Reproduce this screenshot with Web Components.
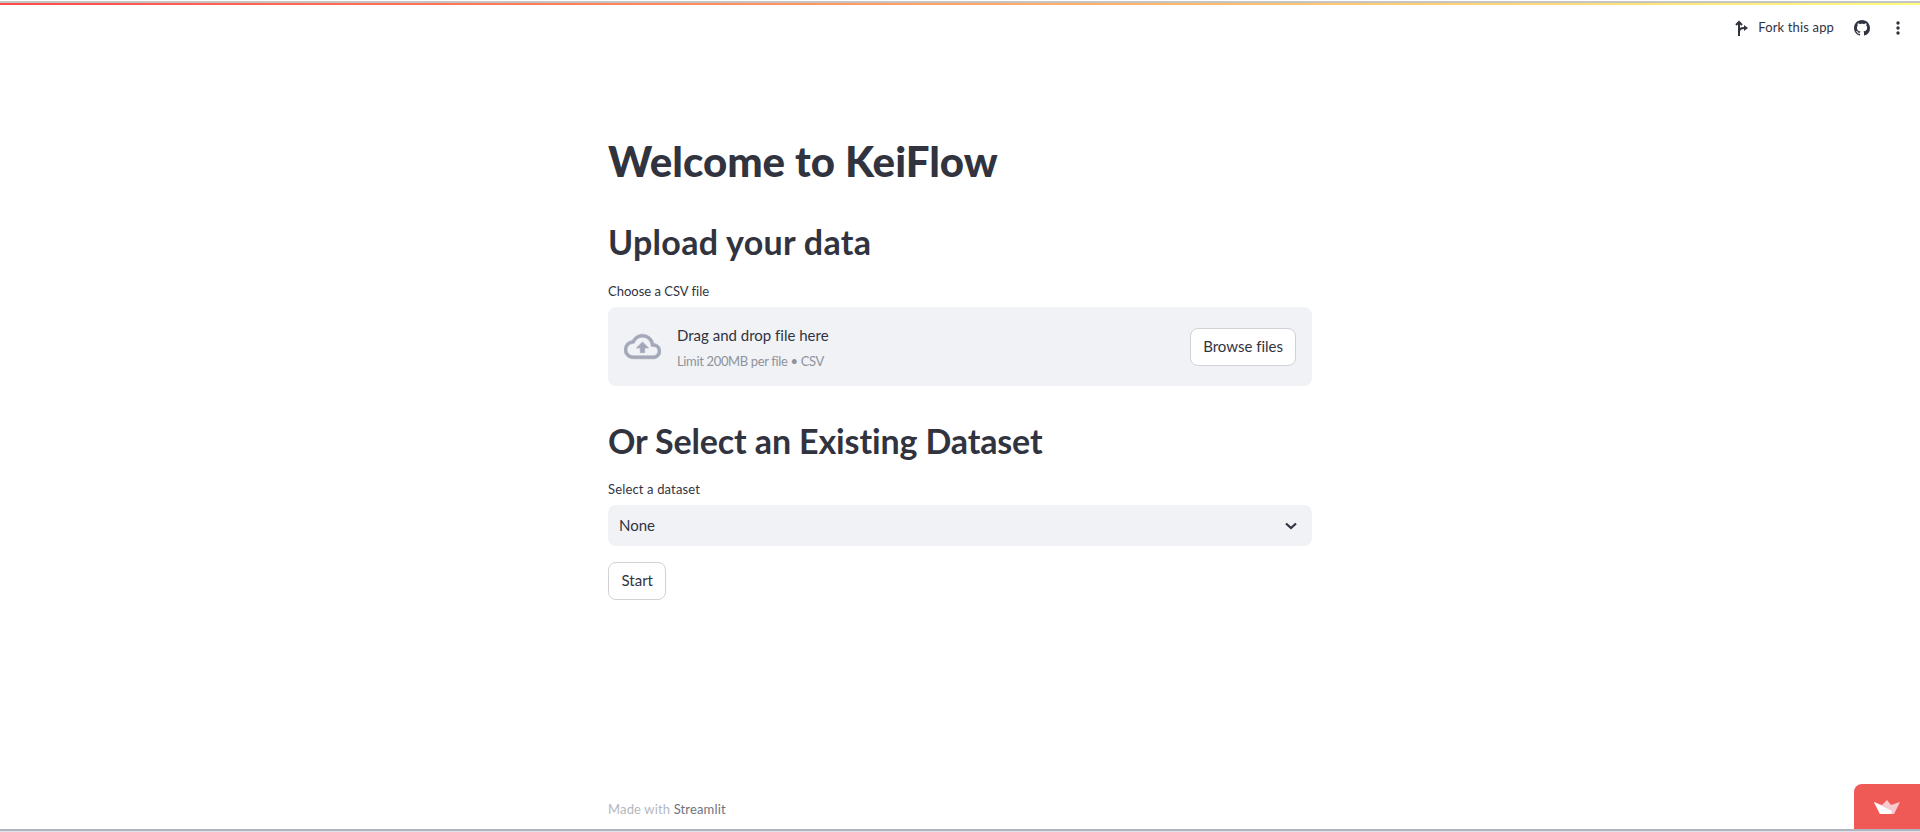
<!DOCTYPE html>
<html>
<head>
<meta charset="utf-8">
<title>KeiFlow</title>
<style>
  html, body { margin: 0; height: 100%; background: #fff; }
  body { font-family: "Lato", "Noto Sans", sans-serif; color: #31333f; font-variant-ligatures: none; }
</style>
</head>
<body>
<app-shell>
  <top-bar slot="top"></top-bar>
  <h-title level="1">Welcome to KeiFlow</h-title>
  <h-title level="2" style="margin-top:27px;letter-spacing:.3px">Upload your data</h-title>
  <file-drop label="Choose a CSV file"></file-drop>
  <h-title level="2" style="margin-top:32px;letter-spacing:-.13px">Or Select an Existing Dataset</h-title>
  <select-box label="Select a dataset" value="None"></select-box>
  <st-button style="margin-top:16px;padding:0 12.5px 2px">Start</st-button>
  <app-footer slot="footer"></app-footer>
  <ship-badge slot="badge"></ship-badge>
</app-shell>

<script>
class AppShell extends HTMLElement {
  constructor() {
    super();
    this.shadowDOM = this.attachShadow({ mode: "open" });
  }
  connectedCallback() {
    this.shadowDOM.innerHTML = `
      <style>
        :host { display: flex; flex-direction: column; height: 832px; overflow: hidden; position: relative; }
        .stripe { height: 2px; margin-top: 1px; flex: none; background: #c4c4c4; }
        .grad { height: 2px; flex: none; background: linear-gradient(90deg, #ff4b4b, #fffd80); }
        main { flex: 1; width: 704px; margin: 0 auto; padding-top: 80px; box-sizing: border-box; display: flex; flex-direction: column; }
        .end { height: 2px; flex: none; background: #b0b4c0; }
        .end2 { height: 1px; flex: none; background: #dfe3ea; }
      </style>
      <div class="stripe"></div>
      <div class="grad"></div>
      <slot name="top"></slot>
      <main><slot></slot><slot name="footer"></slot></main>
      <div class="end"></div>
      <div class="end2"></div>
      <slot name="badge"></slot>`;
  }
}

class TopBar extends HTMLElement {
  constructor() {
    super();
    this.shadowDOM = this.attachShadow({ mode: "open" });
  }
  connectedCallback() {
    this.shadowDOM.innerHTML = `
      <style>
        :host { display: flex; justify-content: flex-end; align-items: center; height: 46px; padding-right: 20px; font-size: 13px; color: #31333f; flex: none; }
        .fork { display: flex; align-items: center; gap: 10px; margin-right: 20px; }
        .fork span { letter-spacing: .15px; padding-bottom: 2px; }
        .git { margin-right: 26px; }
        svg { display: block; }
      </style>
      <div class="fork">
        <svg width="13" height="16" viewBox="0 0 13 16" fill="none" stroke="#31333f" stroke-width="2"><path d="M4 16V2M1 5l3-3 3 3M4 12c0-3 2-4 5-4"/><path d="M9 5l4 3-4 3z" fill="#31333f" stroke="none"/></svg>
        <span>Fork this app</span>
      </div>
      <svg class="git" width="16" height="16" viewBox="0 0 16 16" fill="#31333f"><path d="M8 0C3.58 0 0 3.58 0 8c0 3.54 2.29 6.53 5.47 7.59.4.07.55-.17.55-.38 0-.19-.01-.82-.01-1.49-2.01.37-2.53-.49-2.69-.94-.09-.23-.48-.94-.82-1.13-.28-.15-.68-.52-.01-.53.63-.01 1.08.58 1.23.82.72 1.21 1.87.87 2.33.66.07-.52.28-.87.51-1.07-1.78-.2-3.64-.89-3.64-3.95 0-.87.31-1.59.82-2.15-.08-.2-.36-1.02.08-2.12 0 0 .67-.21 2.2.82.64-.18 1.32-.27 2-.27s1.36.09 2 .27c1.53-1.04 2.2-.82 2.2-.82.44 1.1.16 1.92.08 2.12.51.56.82 1.27.82 2.15 0 3.07-1.87 3.75-3.65 3.95.29.25.54.73.54 1.48 0 1.07-.01 1.93-.01 2.2 0 .21.15.46.55.38A8.01 8.01 0 0 0 16 8c0-4.42-3.58-8-8-8z"/></svg>
      <svg width="4" height="16" viewBox="0 0 4 16" fill="#31333f"><circle cx="2" cy="3" r="1.7"/><circle cx="2" cy="8" r="1.7"/><circle cx="2" cy="13" r="1.7"/></svg>`;
  }
}

class HTitle extends HTMLElement {
  constructor() {
    super();
    this.shadowDOM = this.attachShadow({ mode: "open" });
  }
  connectedCallback() {
    const big = this.getAttribute("level") === "1";
    this.shadowDOM.innerHTML = `
      <style>
        :host { display: block; color: #31333f; font-weight: ${big ? 900 : 700}; font-size: ${big ? 42 : 34}px; line-height: ${big ? 61 : 46}px; }
      </style>
      <slot></slot>`;
  }
}

class FileDrop extends HTMLElement {
  constructor() {
    super();
    this.shadowDOM = this.attachShadow({ mode: "open" });
  }
  connectedCallback() {
    this.shadowDOM.innerHTML = `
      <style>
        :host { display: block; margin-top: 16px; }
        label { display: block; font-size: 13px; line-height: 20px; margin-bottom: 6px; }
        .zone { display: flex; align-items: center; height: 79px; box-sizing: border-box; padding: 0 16px; background: #f0f2f6; border-radius: 8px; }
        .zone svg { stroke: #a3a8b8; stroke-width: .35; }
        .zone st-button { align-self: center; padding-bottom: 1px; }
        .txt { flex: 1; margin-left: 16px; padding-top: 1px; }
        .a { font-size: 15px; line-height: 24px; }
        .b { font-size: 13px; line-height: 20px; color: #8f929b; margin-top: 4px; letter-spacing: -.35px; }
      </style>
      <label>${this.getAttribute("label")}</label>
      <div class="zone">
        <svg width="37" height="37" viewBox="0 0 24 24" fill="#a3a8b8"><path d="M19.35 10.04A7.49 7.49 0 0 0 12 4C9.11 4 6.6 5.64 5.35 8.04A5.994 5.994 0 0 0 0 14c0 3.31 2.69 6 6 6h13c2.76 0 5-2.24 5-5 0-2.64-2.05-4.78-4.65-4.96zM19 18H6c-2.21 0-4-1.79-4-4 0-2.05 1.53-3.76 3.56-3.97l1.07-.11.5-.95A5.469 5.469 0 0 1 12 6c2.62 0 4.88 1.86 5.39 4.43l.3 1.5 1.53.11A2.98 2.98 0 0 1 22 15c0 1.65-1.35 3-3 3zM8 13h2.55v3h2.9v-3H16l-4-4z"/></svg>
        <div class="txt">
          <div class="a">Drag and drop file here</div>
          <div class="b">Limit 200MB per file • CSV</div>
        </div>
        <st-button>Browse files</st-button>
      </div>`;
  }
}

class SelectBox extends HTMLElement {
  constructor() {
    super();
    this.shadowDOM = this.attachShadow({ mode: "open" });
  }
  connectedCallback() {
    this.shadowDOM.innerHTML = `
      <style>
        :host { display: block; margin-top: 15px; }
        label { display: block; font-size: 13px; line-height: 20px; margin-bottom: 6px; letter-spacing: .15px; }
        .box { display: flex; align-items: center; justify-content: space-between; height: 41px; box-sizing: border-box; padding: 0 15px 0 11px; background: #f0f2f6; border-radius: 8px; font-size: 15px; }
        .box span { padding-bottom: 2px; }
      </style>
      <label>${this.getAttribute("label")}</label>
      <div class="box">
        <span>${this.getAttribute("value")}</span>
        <svg width="12" height="8" viewBox="0 0 12 8" fill="none" stroke="#31333f" stroke-width="2.2"><path d="M1 1.5l5 4.5 5-4.5"/></svg>
      </div>`;
  }
}

class StButton extends HTMLElement {
  constructor() {
    super();
    this.shadowDOM = this.attachShadow({ mode: "open" });
  }
  connectedCallback() {
    this.shadowDOM.innerHTML = `
      <style>
        :host { display: inline-flex; flex: none; align-self: flex-start; align-items: center; height: 38px; box-sizing: border-box; padding: 0 12px; background: #fff; border: 1px solid #d0d2d7; border-radius: 8px; font-size: 15px; color: #31333f; }
      </style>
      <slot></slot>`;
  }
}

class AppFooter extends HTMLElement {
  constructor() {
    super();
    this.shadowDOM = this.attachShadow({ mode: "open" });
  }
  connectedCallback() {
    this.shadowDOM.innerHTML = `
      <style>
        :host { display: block; margin-top: auto; font-size: 13px; line-height: 20px; color: #b5b7bd; padding-bottom: 10px; letter-spacing: .15px; }
        span { color: #70727c; }
      </style>
      Made with <span>Streamlit</span>`;
  }
}

class ShipBadge extends HTMLElement {
  constructor() {
    super();
    this.shadowDOM = this.attachShadow({ mode: "open" });
  }
  connectedCallback() {
    this.shadowDOM.innerHTML = `
      <style>
        :host { position: absolute; right: 0; bottom: 3px; width: 66px; height: 45px; background: #f05a56; border-top-left-radius: 8px; display: flex; align-items: center; justify-content: center; }
      </style>
      <svg width="26" height="14" viewBox="0 0 26 14">
        <path d="M0 2l8 3 5-5 4 5 9-3-6 12H6z" fill="#f9c9d0"/>
        <path d="M0 2l18 9-1 3H6z" fill="#fff"/>
      </svg>`;
  }
}

customElements.define("app-shell", AppShell);
customElements.define("top-bar", TopBar);
customElements.define("h-title", HTitle);
customElements.define("file-drop", FileDrop);
customElements.define("select-box", SelectBox);
customElements.define("st-button", StButton);
customElements.define("app-footer", AppFooter);
customElements.define("ship-badge", ShipBadge);
</script>
</body>
</html>
